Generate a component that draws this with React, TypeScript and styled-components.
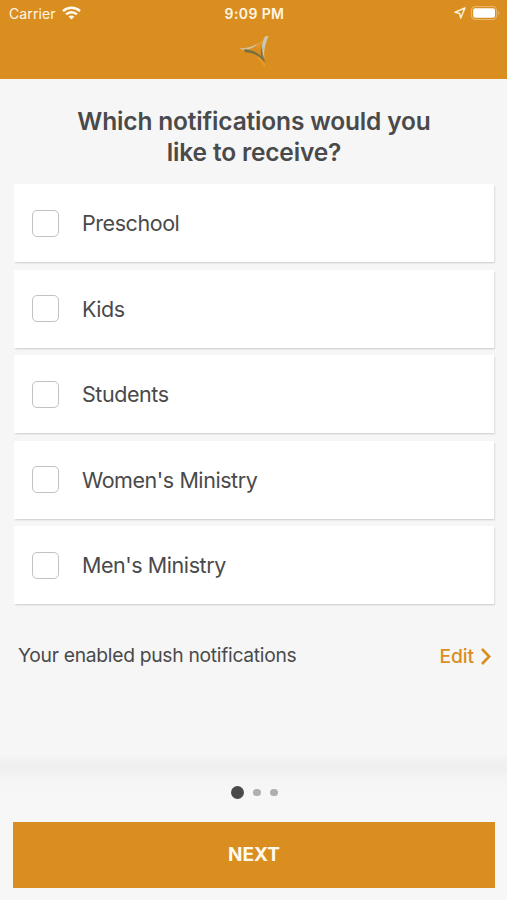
import React from 'react';
import styled, { createGlobalStyle } from 'styled-components';

const GlobalStyle = createGlobalStyle`
  * { box-sizing: border-box; }
  body { margin: 0; background: #f6f6f6; }
`;

const Screen = styled.div`
  display: flex;
  flex-direction: column;
  height: 900px;
  width: 507px;
  overflow: hidden;
  background: #f6f6f6;
  color: #4a4a4a;
  font-family: Inter, 'Liberation Sans', sans-serif;
`;

const Header = styled.header`
  flex: none;
  height: 79px;
  background: #d98e1f;
  color: #fff6e6;
`;

const StatusBar = styled.div`
  display: grid;
  grid-template-columns: 1fr auto 1fr;
  align-items: center;
  height: 27px;
  padding: 0 7px 0 9px;
`;

const Carrier = styled.div`
  display: flex;
  align-items: center;
  gap: 6px;
  font-size: 14px;
  line-height: 28px;
  letter-spacing: 0.1px;
  svg { margin-top: -2px; }
`;

const Clock = styled.div`
  font-size: 14px;
  font-weight: 600;
  line-height: 28px;
  letter-spacing: 0.4px;
`;

const StatusIcons = styled.div`
  display: flex;
  justify-content: flex-end;
  align-items: center;
  gap: 4px;
  margin-top: -2px;
`;

const LogoRow = styled.div`
  display: flex;
  justify-content: center;
  padding: 7px 0 0;
`;

const Content = styled.main`
  flex: none;
  height: 676px;
  padding: 27px 13px 0 14px;
`;

const Title = styled.h1`
  margin: 0 0 17px;
  font-size: 24.5px;
  line-height: 30.5px;
  font-weight: 560;
  letter-spacing: -0.16px;
  text-align: center;
`;

const Options = styled.div`
  display: flex;
  flex-direction: column;
  gap: 7.5px;
`;

const Option = styled.label`
  display: flex;
  align-items: center;
  gap: 23px;
  height: 78px;
  padding-left: 18px;
  background: #fff;
  box-shadow: 1px 1.5px 1.5px rgba(0, 0, 0, 0.13);
  font-size: 21.5px;
  letter-spacing: -0.44px;
`;

const Checkbox = styled.input`
  appearance: none;
  flex: none;
  width: 27px;
  height: 27px;
  margin: 0;
  border: 1.5px solid #c2c2c2;
  border-radius: 5px;
  background: #fff;
`;

const PushRow = styled.div`
  display: flex;
  justify-content: space-between;
  align-items: center;
  height: 30px;
  margin-top: 36px;
  padding: 0 3px 0 4px;
  font-size: 19.3px;
  letter-spacing: -0.3px;
`;

const EditLink = styled.button`
  display: flex;
  align-items: center;
  gap: 7px;
  padding: 2px 0 0;
  border: 0;
  background: none;
  color: #d98e1f;
  font: inherit;
  font-weight: 500;
  letter-spacing: -0.1px;
`;

const Footer = styled.footer`
  flex: 1;
  display: flex;
  flex-direction: column;
  padding: 31px 12px 12px 13px;
  background: linear-gradient(#f6f6f6, #f0f0f0 8px, #f0f0f0 14px, #f5f5f5 24px, #f7f7f7 40px);
  border-bottom: 1px solid #eeeeee;
`;

const Dots = styled.div`
  display: flex;
  justify-content: center;
  align-items: center;
  gap: 9.5px;
  height: 13px;
  margin-bottom: 23px;
`;

const Dot = styled.span<{ $active?: boolean }>`
  width: ${p => (p.$active ? 13 : 7.5)}px;
  height: ${p => (p.$active ? 13 : 7.5)}px;
  border-radius: 50%;
  background: ${p => (p.$active ? '#4a4a4a' : '#b0b0b0')};
`;

const NextButton = styled.button`
  height: 66px;
  padding: 0 0 1px;
  border: 0;
  background: #d98e1f;
  color: #fffaf0;
  font-family: inherit;
  font-size: 19px;
  font-weight: 700;
`;

const WifiIcon = () => (
  <svg width="19" height="14" viewBox="0 0 19 14" fill="none" stroke="#fffaf0" strokeWidth="2.5">
    <path d="M1 5.1C5.7.6 13.3.6 18 5.1" />
    <path d="M4.1 8.3c3-2.9 7.8-2.9 10.8 0" />
    <path d="M6.5 10.6c1.7-1.6 4.3-1.6 6 0l-3 3z" fill="#fffaf0" stroke="none" />
  </svg>
);

const LocationIcon = () => (
  <svg width="12" height="12" viewBox="0 0 12 12" fill="none" stroke="#fff0d8" strokeWidth="1.5" strokeLinejoin="round">
    <path d="M11 1 1 5.3l4.6 1.1L6.7 11z" />
  </svg>
);

const BatteryIcon = () => (
  <svg width="30" height="16" viewBox="0 0 30 16">
    <rect x="1.5" y="1.5" width="25" height="13" rx="3.8" fill="none" stroke="#e7b66c" strokeWidth="1.2" />
    <rect x="3.2" y="3.2" width="21.8" height="9.6" rx="2" fill="#fff" />
    <path d="M28 6v4c1.7-.7 1.7-3.3 0-4z" fill="#e7b66c" />
  </svg>
);

const Logo = () => (
  <svg width="32" height="34" viewBox="0 0 32 34">
    <path d="M1 14.5c8 0 15-2 21-6.5-5 6-12 8-17 8z" fill="#d0c6a5" />
    <path d="M30.5 2c-3 8-5 14-4 22-4-7-3-17 1-22z" fill="#c9c7b4" />
    <path d="M6 15.2c9 .3 16 4 20 12-6-6-12-9-19-9z" fill="#777044" />
    <path d="M24.5 13c-1 6 .5 10 3 15l-2-1c-3.5-5-3.5-9-1-14z" fill="#6f7656" />
    <path d="M19 14c2-2 4-4 5-7M20 23l7 9" fill="none" stroke="#f09a27" strokeWidth="1.5" />
  </svg>
);

const ChevronIcon = () => (
  <svg width="10" height="17" viewBox="0 0 10 17" fill="none" stroke="#d98e1f" strokeWidth="2.6">
    <path d="m1 1 7.3 7.5L1 16" />
  </svg>
);

const options = ['Preschool', 'Kids', 'Students', "Women's Ministry", "Men's Ministry"];

export default function App() {
  return (
    <Screen>
      <GlobalStyle />
      <Header>
        <StatusBar>
          <Carrier>Carrier <WifiIcon /></Carrier>
          <Clock>9:09 PM</Clock>
          <StatusIcons><LocationIcon /><BatteryIcon /></StatusIcons>
        </StatusBar>
        <LogoRow><Logo /></LogoRow>
      </Header>
      <Content>
        <Title>Which notifications would you<br />like to receive?</Title>
        <Options>
          {options.map(name => (
            <Option key={name}><Checkbox type="checkbox" /><span>{name}</span></Option>
          ))}
        </Options>
        <PushRow>
          <span>Your enabled push notifications</span>
          <EditLink>Edit <ChevronIcon /></EditLink>
        </PushRow>
      </Content>
      <Footer>
        <Dots><Dot $active /><Dot /><Dot /></Dots>
        <NextButton>NEXT</NextButton>
      </Footer>
    </Screen>
  );
}
